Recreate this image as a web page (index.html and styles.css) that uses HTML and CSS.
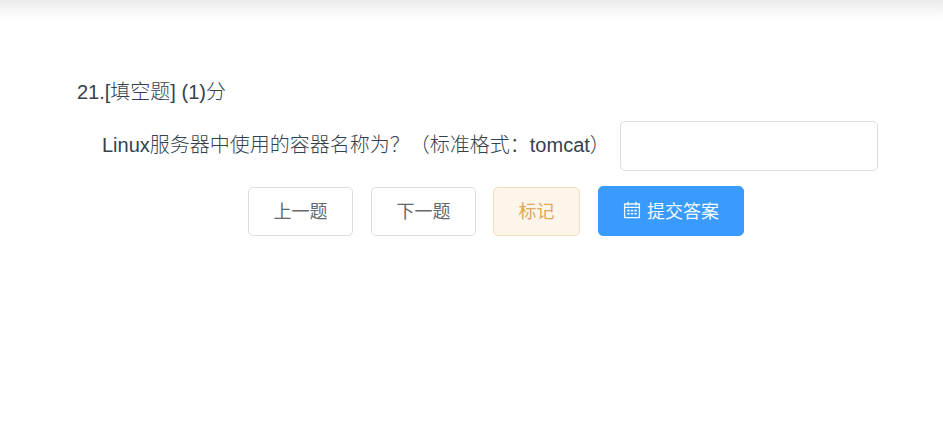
FILE: index.html
```html
<!DOCTYPE html>
<html lang="zh-CN">
<head>
<meta charset="utf-8">
<title>填空题</title>
<link rel="stylesheet" href="styles.css">
</head>
<body>
<main class="exam">
  <h1 class="question-head">21.[填空题] (1)分</h1>
  <div class="question">
    <label class="question-text" for="answer">Linux服务器中使用的容器名称为？（标准格式：tomcat）</label>
    <input class="answer" id="answer" type="text">
  </div>
  <div class="actions">
    <button class="btn">上一题</button>
    <button class="btn">下一题</button>
    <button class="btn btn-mark">标记</button>
    <button class="btn btn-submit">
      <svg class="icon" viewBox="0 0 18 18" fill="none" stroke="currentColor" stroke-width="1.3"><path d="M1.6 3h14.8v13.6H1.6zM1.6 6.4h14.8M5 .8v3.6M13 .8v3.6"/><path d="M4.2 9.6h2.4M7.8 9.6h2.4M11.4 9.6h2.4M4.2 12.8h2.4M7.8 12.8h2.4M11.4 12.8h2.4" stroke-width="1.6"/></svg>
      <span>提交答案</span>
    </button>
  </div>
</main>
</body>
</html>
```
FILE: styles.css
```css
* { box-sizing: border-box; }
body {
  margin: 0;
  min-height: 423px;
  background: linear-gradient(#eaeaea, #ededed 3px, #f8f8f8 11px, #fff 20px) no-repeat #fff;
  color: #34424e;
  font-family: "Liberation Sans", "Noto Sans CJK SC", sans-serif;
  font-size: 20px;
}
.exam { padding: 77px 65px 0 77px; }
.question-head { margin: 0; font-size: 20px; font-weight: 300; line-height: 30px; }
.question { display: flex; align-items: center; justify-content: space-between; margin-top: 14px; padding-left: 25px; height: 50px; }
.question-text { padding-bottom: 5px; font-weight: 300; white-space: nowrap; }
.answer { width: 258px; height: 50px; border: 1px solid #dcdde0; border-radius: 5px; background: #fff; font: inherit; padding: 0 20px; }
.actions { display: flex; align-items: flex-end; gap: 18px; margin: 15px 0 0 171px; }
.btn { height: 49px; width: 105px; padding: 0 0 3px; border: 1px solid #dcdde0; border-radius: 5px; background: #fff; color: #66686c; font: 400 18px "Liberation Sans", "Noto Sans CJK SC", sans-serif; }
.btn-mark { width: 87px; margin-left: -1px; background: #fef5ea; border-color: #f0dfbd; color: #dfa65c; }
.btn-submit { width: 146px; height: 50px; display: flex; align-items: center; justify-content: center; gap: 6px; background: #3a9bff; border-color: #3a9bff; color: #f2faff; }
.icon { width: 18px; height: 18px; }
```
